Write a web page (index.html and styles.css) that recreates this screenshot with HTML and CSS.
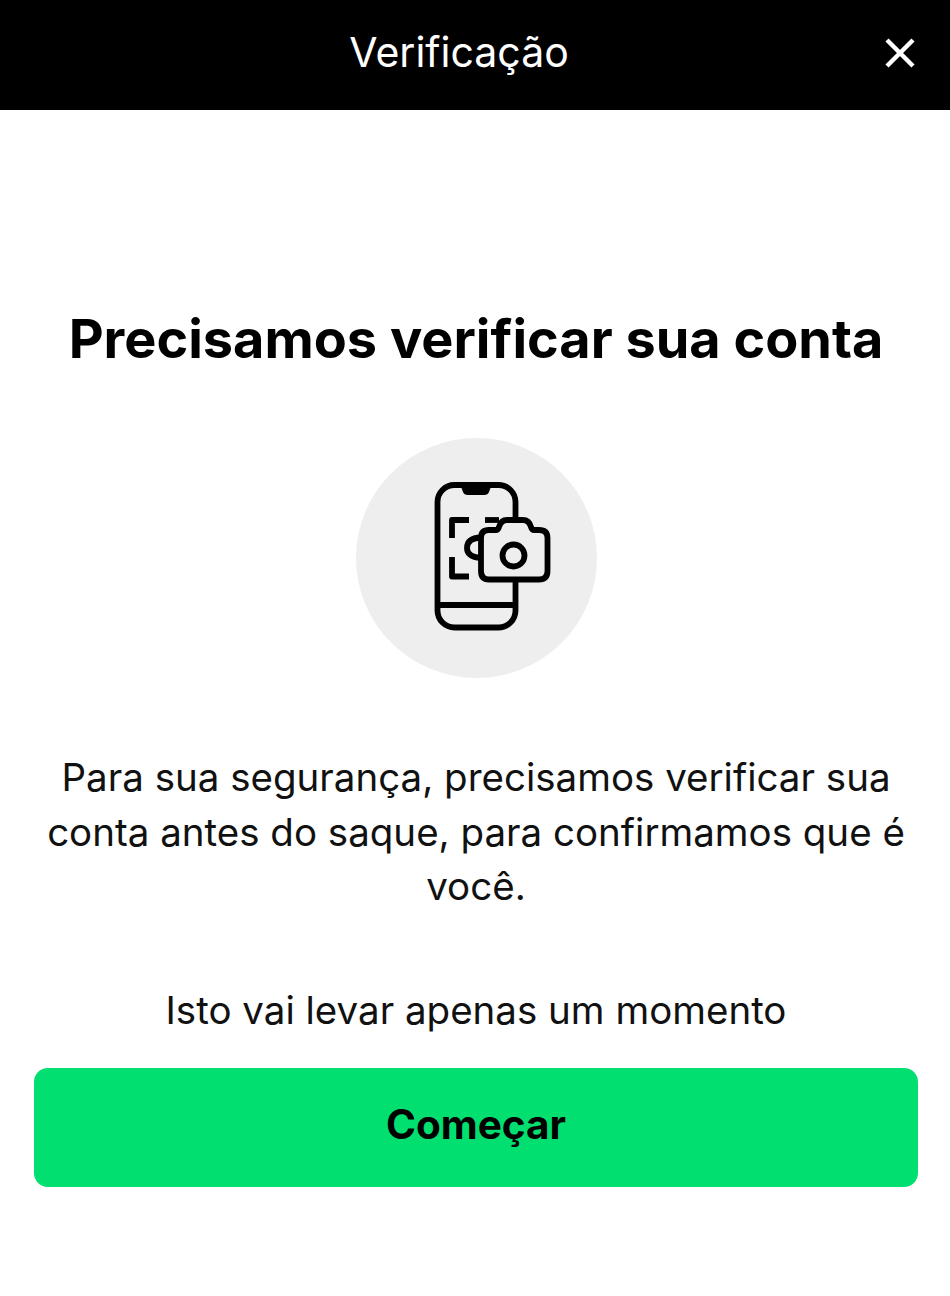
FILE: index.html
```html
<!DOCTYPE html>
<html lang="pt">
<head>
<meta charset="utf-8">
<title>Verificação</title>
<link rel="stylesheet" href="styles.css">
</head>
<body>
<header class="topbar">
  <span class="topbar-title">Verificação</span>
  <button class="close" aria-label="Fechar">
    <svg width="32" height="32" viewBox="0 0 32 32"><path d="M3 3L29 29M29 3L3 29" stroke="#fff" stroke-width="4.500" fill="none"/></svg>
  </button>
</header>
<main class="content">
  <h1 class="heading">Precisamos verificar sua conta</h1>
  <div class="badge">
    <svg class="badge-icon" width="241" height="240" viewBox="356 438 241 240" fill="none" stroke="#000" stroke-width="5.800" stroke-linejoin="round">
      <rect x="437.500" y="485" width="78" height="142.500" rx="17"/>
      <path d="M460 484h32l-3 8q-1 3-5 3h-16q-4 0-5-3z" fill="#000" stroke="none"/>
      <path d="M438 605H515"/>
      <path d="M469 520H452V538M452 557V576.500H469"/>
      <path d="M485 520H499"/>
      <path d="M481 537.500Q467 538 467 548Q467 557 481 558"/>
      <path d="M481 571V538Q481 530 489 530H496Q498 530 499 527Q501 520 507 520H523Q529 520 531 527Q532 530 534 530H539Q547.500 530 547.500 538V571Q547.500 579.500 539 579.500H489Q481 579.500 481 571Z" fill="#eee"/>
      <circle cx="513.500" cy="555.500" r="11"/>
    </svg>
  </div>
  <p class="text">Para sua segurança, precisamos verificar sua conta antes do saque, para confirmamos que é você.</p>
  <p class="text note">Isto vai levar apenas um momento</p>
  <button class="cta">Começar</button>
</main>
</body>
</html>
```
FILE: styles.css
```css
* { box-sizing: border-box; }
html, body { margin: 0; padding: 0; background: #fff; }
body { font-family: Inter, sans-serif; color: #000; }
.topbar { height: 110px; background: #000; display: flex; align-items: center; justify-content: center; position: relative; padding-right: 32px; }
.topbar-title { color: #fff; font-size: 41px; line-height: 48px; margin-top: -6px; }
.close { position: absolute; right: 34px; top: 37px; width: 32px; height: 32px; padding: 0; border: 0; background: none; display: flex; }
.content { display: flex; flex-direction: column; align-items: center; padding: 199px 32px 0 34px; }
.heading { margin: 0; font-size: 54px; line-height: 60px; font-weight: 700; text-align: center; white-space: nowrap; }
.badge { width: 241px; height: 240px; margin-top: 69px; border-radius: 50%; background: #eee; display: flex; }
.text { margin: 72px 0 0; font-size: 38.500px; line-height: 54.500px; text-align: center; color: #111; }
.note { margin-top: 69px; }
.cta { width: 884px; height: 119px; margin-top: 31px; padding: 0 0 6px; border: 0; border-radius: 14px; background: #00df6f; font-family: inherit; font-size: 40.500px; font-weight: 700; color: #000; }
```
